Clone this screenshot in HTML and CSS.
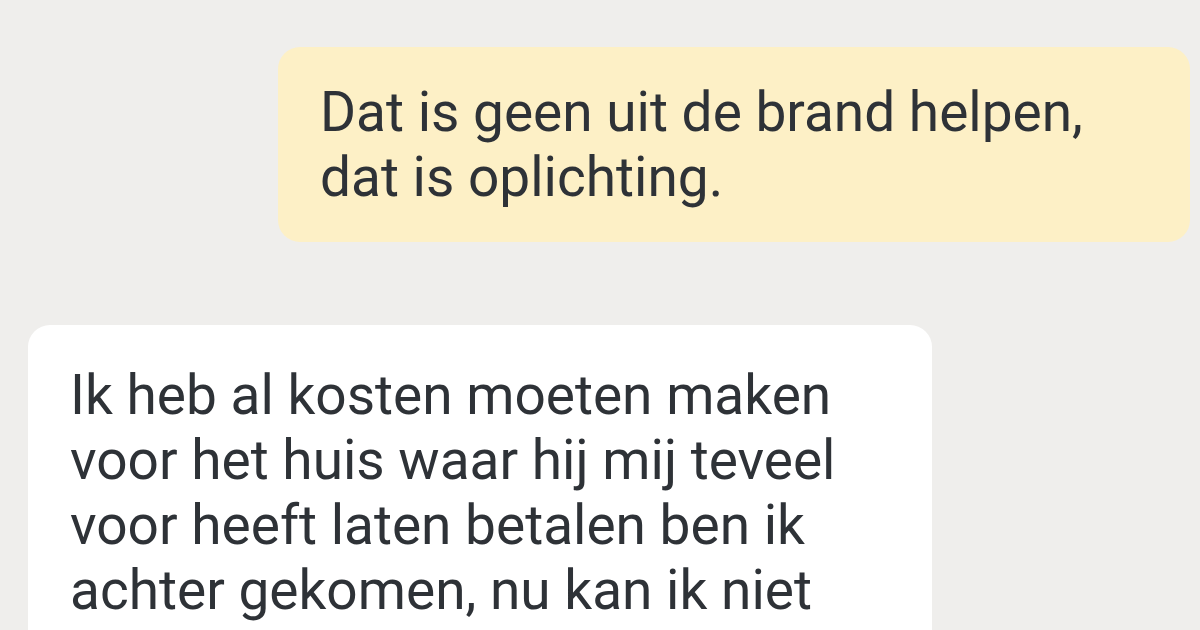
FILE: index.html
```html
<!DOCTYPE html>
<html lang="nl">
<head>
    <meta charset="UTF-8">
    <meta name="viewport" content="width=device-width, initial-scale=1.0">
    <title>Chat</title>
    <link rel="stylesheet" href="styles.css">
</head>
<body>

    <div class="chat">
        <div class="bubble sent">
            <p>Dat is geen uit de brand helpen,<br>dat is oplichting.</p>
        </div>

        <div class="bubble received">
            <p>Ik heb al kosten moeten maken<br>voor het huis waar hij mij teveel<br>voor heeft laten betalen ben ik<br>achter gekomen, nu kan ik niet</p>
        </div>
    </div>

</body>
</html>
```

FILE: styles.css
```css
html, body {
    margin: 0;
    height: 100%;
    overflow: hidden;
}

body {
    font-family: Roboto, 'Noto Sans', sans-serif;
    background: #efeeec;
    color: #2e3237;
}

.chat {
    display: flex;
    flex-direction: column;
    gap: 83px;
    padding: 47px 10px 0 28px;
}

.bubble {
    border-radius: 22px;
}

.bubble p {
    margin: 0;
    font-size: 55px;
    line-height: 65px;
}

.sent {
    align-self: flex-end;
    width: 912px;
    box-sizing: border-box;
    padding: 33px 40px 32px 42px;
    background: #fdf0c6;
}

.received {
    align-self: flex-start;
    width: 904px;
    box-sizing: border-box;
    padding: 38px 40px 80px 42px;
    background: #ffffff;
}
```
